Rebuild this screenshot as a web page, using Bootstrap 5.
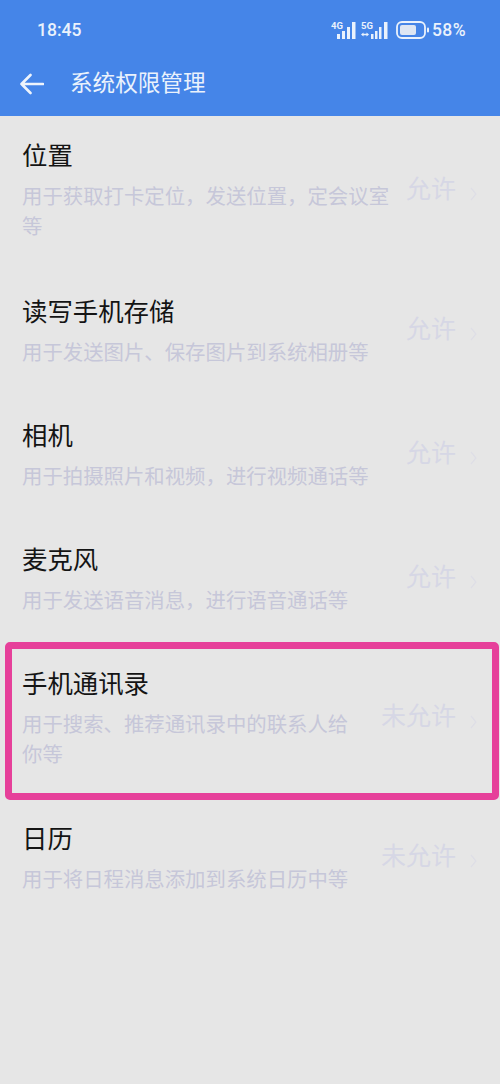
<!DOCTYPE html>
<html lang="zh">
<head>
<meta charset="utf-8">
<title>系统权限管理</title>
<link href="https://cdn.jsdelivr.net/npm/bootstrap@5.3.0/dist/css/bootstrap.min.css" rel="stylesheet">
<style>
html,body{height:100%}
body{background:#e6e6e6;font-family:Roboto,"Noto Sans CJK SC",sans-serif;overflow:hidden}
.app-head{background:#4585e8;color:#eaf2fc;height:116px}
.stat-bar{height:60px;padding:0 34px 0 37px;font-size:17.5px;font-weight:500}
.pct{font-size:17.5px;letter-spacing:.4px;margin-left:3px}
.sig-four{margin-right:5px}
.sig-five{margin-right:7px}
.head-bar{height:48px;padding-left:20px}
.head-title{font-size:22.6px;line-height:32px;margin-left:26px;font-weight:400}
.perm-row{padding:23px 15px 0 22px;height:124px;position:relative}
.perm-row.tall-one{height:156px}
.perm-row.tall-two{height:155px}
.perm-text{width:368px}
.perm-text.narrow-text{width:330px}
.perm-name{font-size:25.4px;line-height:34px;color:#141414;font-weight:400;margin:0 0 10px}
.perm-desc{font-size:20.4px;line-height:29.5px;color:#c6c7d9;margin:0}
.perm-state{font-size:25px;line-height:30px;color:#d6d7e5;white-space:nowrap;margin-bottom:9px}
.perm-side{position:absolute;right:44px;top:0;bottom:0}
.perm-arrow{position:absolute;right:23px;top:0;bottom:0}
.flagged::after{content:"";position:absolute;left:5px;right:1px;top:-2px;bottom:-1px;border:7.5px solid #e6409a;border-radius:5px;pointer-events:none}
</style>
</head>
<body>
<header class="app-head d-flex flex-column">
  <div class="stat-bar d-flex align-items-center justify-content-between">
    <span>18:45</span>
    <div class="d-flex align-items-center">
      <svg class="sig-four" width="25" height="20" viewBox="0 0 25 20" fill="#eaf2fc"><text x="0" y="9" font-family="Roboto" font-size="9.5" font-weight="700">4G</text><rect x="6" y="14" width="3" height="5"/><rect x="11" y="11" width="3" height="8"/><rect x="16" y="7" width="3" height="12"/><rect x="21" y="2" width="3.5" height="17"/></svg>
      <svg class="sig-five" width="28" height="20" viewBox="0 0 28 20" fill="#eaf2fc"><text x="0" y="9" font-family="Roboto" font-size="9.5" font-weight="700">5G</text><path d="M0 14.5l2.5-2v1.2h3v-1.2l2.5 2-2.5 2v-1.200h-3v1.200z"/><rect x="10" y="14" width="2.500" height="5"/><rect x="14" y="11" width="2.500" height="8"/><rect x="18" y="7" width="2.500" height="12"/><rect x="23" y="2" width="3.500" height="17"/></svg>
      <svg width="33" height="20" viewBox="0 0 33 20"><rect x="1" y="2" width="28" height="16" rx="5" fill="none" stroke="#eaf2fc" stroke-width="1.800"/><rect x="4" y="5" width="16" height="10" rx="2" fill="#dde6f3"/><rect x="31" y="7.500" width="2" height="5" rx="1" fill="#eaf2fc"/></svg>
      <span class="pct">58%</span>
    </div>
  </div>
  <div class="head-bar d-flex align-items-center">
    <svg width="24" height="24" viewBox="0 0 24 24" fill="none" stroke="#eef4fc" stroke-width="2.600" stroke-linecap="round" stroke-linejoin="round"><path d="M1.500 12H23M10.500 3 1.500 12l9 9"/></svg>
    <h1 class="head-title mb-0">系统权限管理</h1>
  </div>
</header>
<main>
  <section class="perm-row tall-one">
    <div class="perm-text"><h2 class="perm-name">位置</h2><p class="perm-desc">用于获取打卡定位，发送位置，定会议室等</p></div>
    <div class="perm-side d-flex align-items-center"><span class="perm-state">允许</span></div>
    <div class="perm-arrow d-flex align-items-center"><svg width="7" height="14" viewBox="0 0 7 14" fill="none" stroke="#dedee6" stroke-width="1.200"><path d="M1 1l5 6-5 6"/></svg></div>
  </section>
  <section class="perm-row">
    <div class="perm-text"><h2 class="perm-name">读写手机存储</h2><p class="perm-desc">用于发送图片、保存图片到系统相册等</p></div>
    <div class="perm-side d-flex align-items-center"><span class="perm-state">允许</span></div>
    <div class="perm-arrow d-flex align-items-center"><svg width="7" height="14" viewBox="0 0 7 14" fill="none" stroke="#dedee6" stroke-width="1.200"><path d="M1 1l5 6-5 6"/></svg></div>
  </section>
  <section class="perm-row">
    <div class="perm-text"><h2 class="perm-name">相机</h2><p class="perm-desc">用于拍摄照片和视频，进行视频通话等</p></div>
    <div class="perm-side d-flex align-items-center"><span class="perm-state">允许</span></div>
    <div class="perm-arrow d-flex align-items-center"><svg width="7" height="14" viewBox="0 0 7 14" fill="none" stroke="#dedee6" stroke-width="1.200"><path d="M1 1l5 6-5 6"/></svg></div>
  </section>
  <section class="perm-row">
    <div class="perm-text"><h2 class="perm-name">麦克风</h2><p class="perm-desc">用于发送语音消息，进行语音通话等</p></div>
    <div class="perm-side d-flex align-items-center"><span class="perm-state">允许</span></div>
    <div class="perm-arrow d-flex align-items-center"><svg width="7" height="14" viewBox="0 0 7 14" fill="none" stroke="#dedee6" stroke-width="1.200"><path d="M1 1l5 6-5 6"/></svg></div>
  </section>
  <section class="perm-row tall-two flagged">
    <div class="perm-text narrow-text"><h2 class="perm-name">手机通讯录</h2><p class="perm-desc">用于搜索、推荐通讯录中的联系人给你等</p></div>
    <div class="perm-side d-flex align-items-center"><span class="perm-state">未允许</span></div>
    <div class="perm-arrow d-flex align-items-center"><svg width="7" height="14" viewBox="0 0 7 14" fill="none" stroke="#dedee6" stroke-width="1.200"><path d="M1 1l5 6-5 6"/></svg></div>
  </section>
  <section class="perm-row">
    <div class="perm-text"><h2 class="perm-name">日历</h2><p class="perm-desc">用于将日程消息添加到系统日历中等</p></div>
    <div class="perm-side d-flex align-items-center"><span class="perm-state">未允许</span></div>
    <div class="perm-arrow d-flex align-items-center"><svg width="7" height="14" viewBox="0 0 7 14" fill="none" stroke="#dedee6" stroke-width="1.200"><path d="M1 1l5 6-5 6"/></svg></div>
  </section>
</main>
<script src="https://cdn.jsdelivr.net/npm/bootstrap@5.3.0/dist/js/bootstrap.bundle.min.js"></script>
</body>
</html>
